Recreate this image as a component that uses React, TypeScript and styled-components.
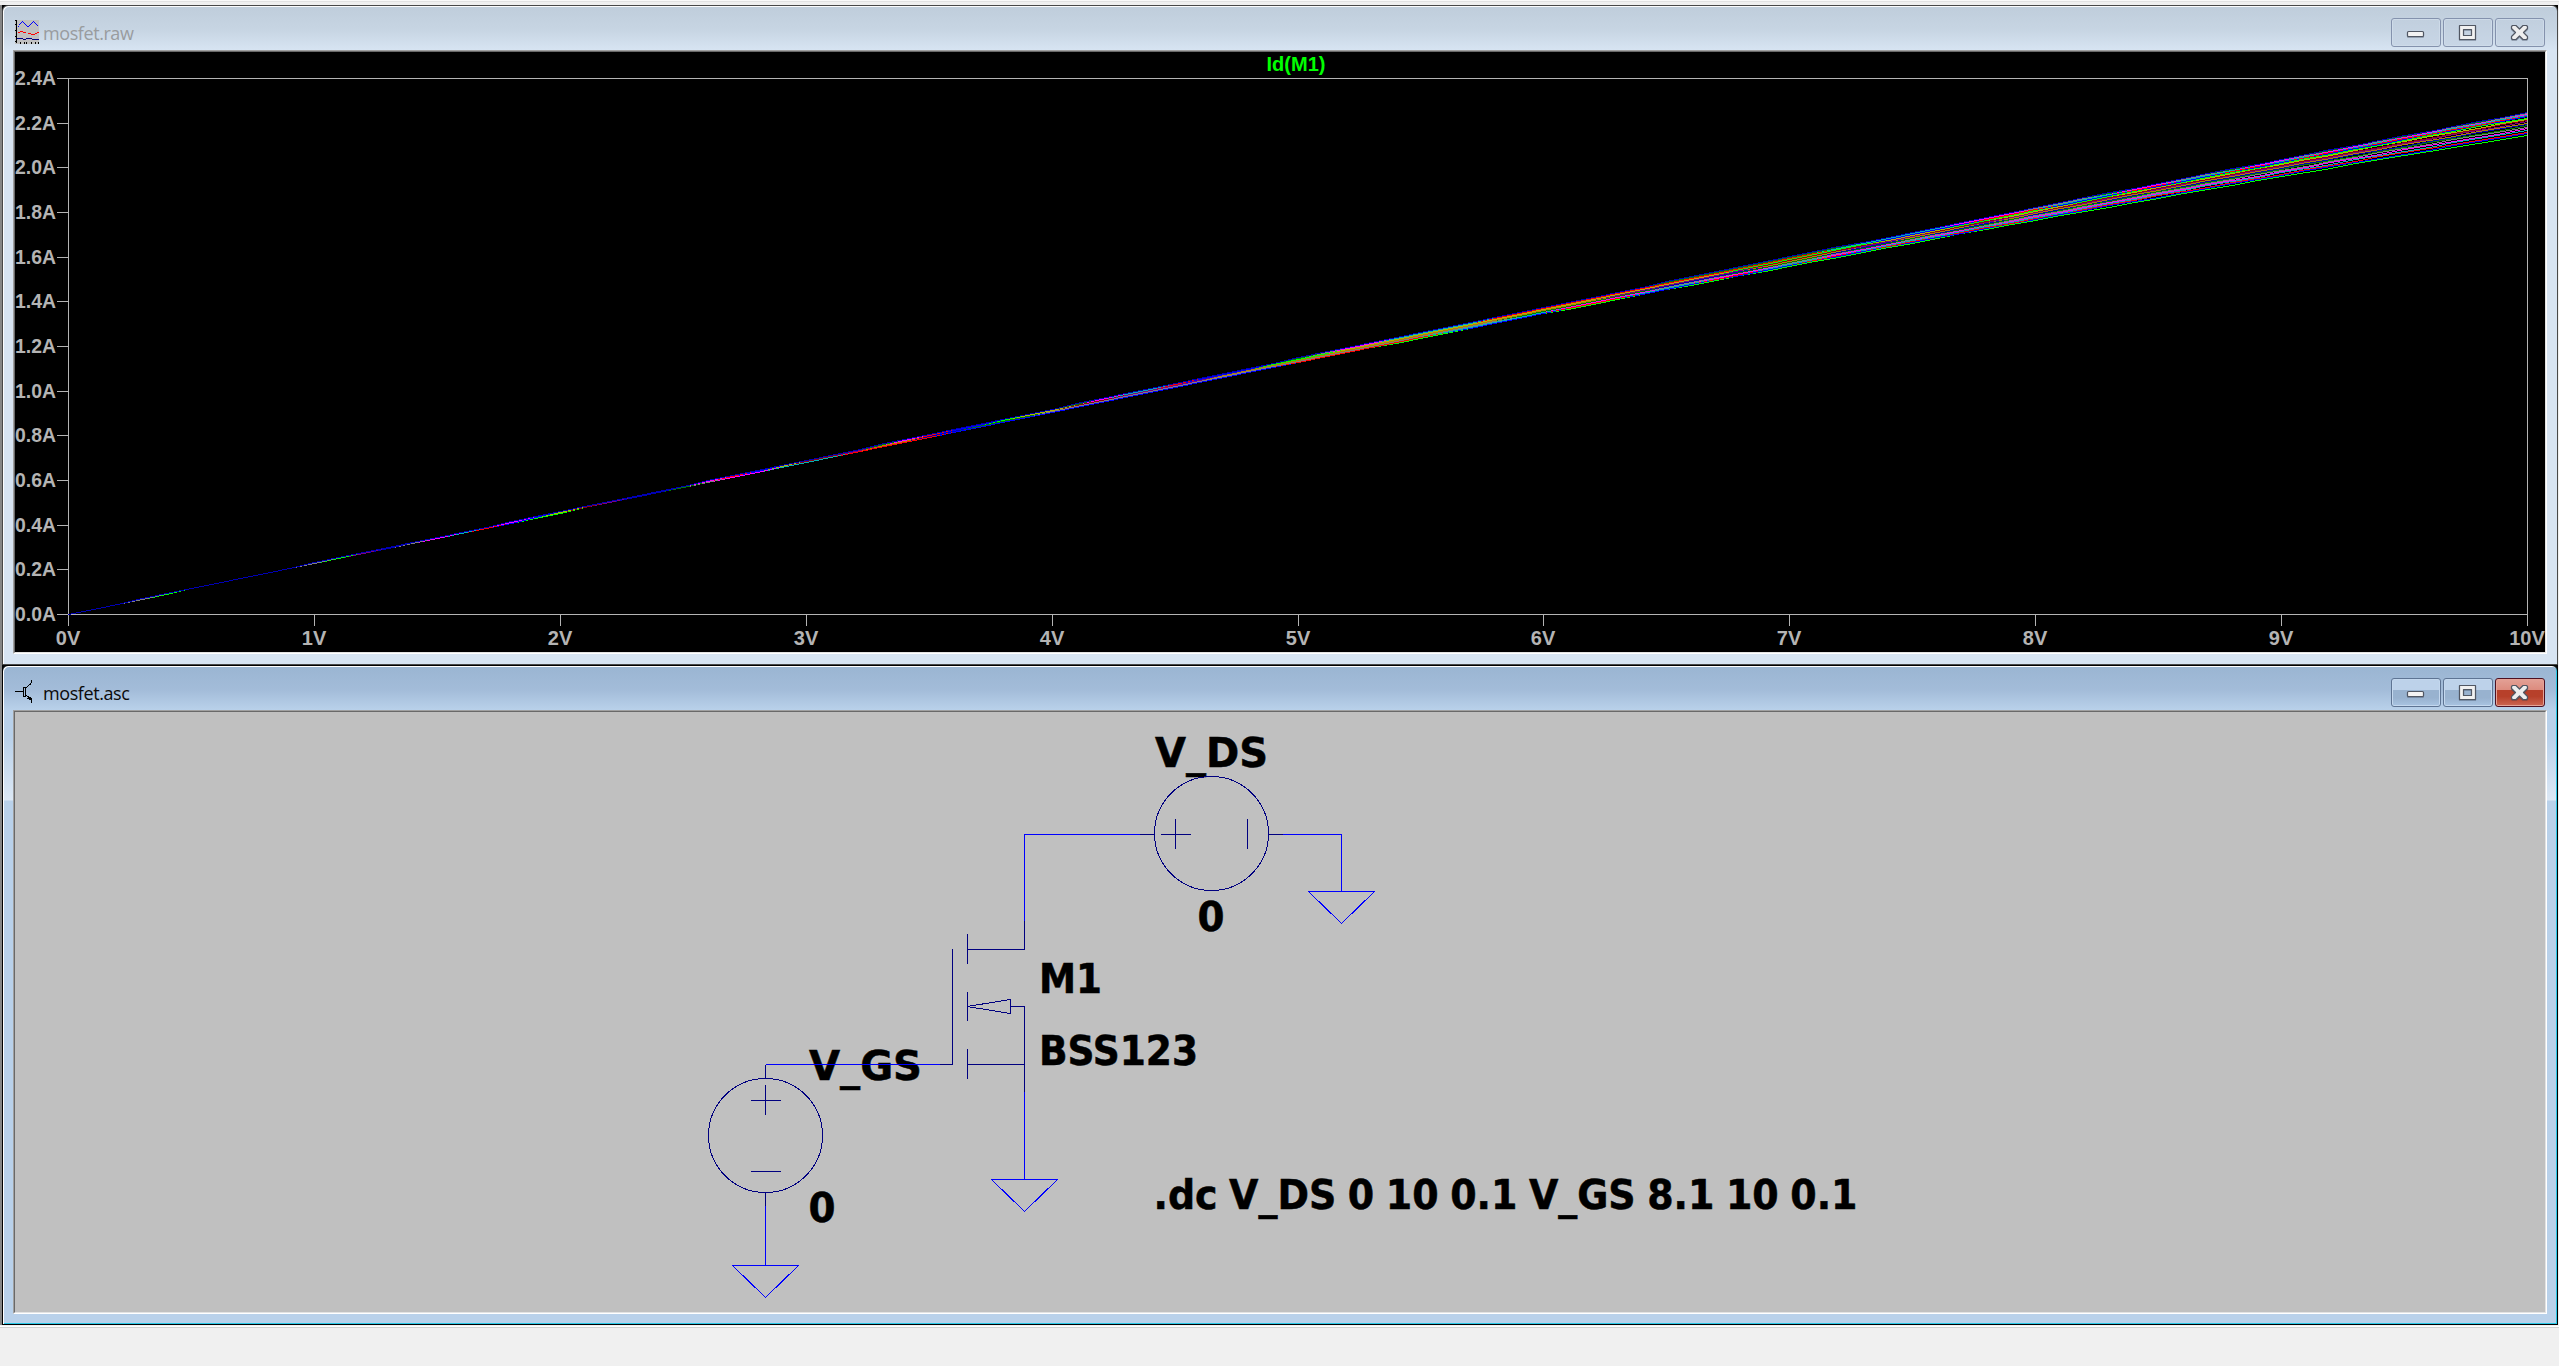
import React from "react";
import styled, { createGlobalStyle, css } from "styled-components";

const GlobalStyle = createGlobalStyle`
  html, body { margin: 0; padding: 0; background: #f0f0f0; }
  body { overflow: hidden; }
`;

const Workspace = styled.main`
  box-sizing: border-box;
  width: 2559px;
  height: 1366px;
  display: flex;
  flex-direction: column;
  background: #f0f0f0;
`;

const ToolbarEdge = styled.div`
  box-sizing: border-box;
  height: 5px;
  flex: none;
  background: #f0f0f0;
  border-top: 1px solid #fafafa;
  box-shadow: inset 0 1px 0 #e2e2e2;
`;

const MdiArea = styled.section`
  box-sizing: border-box;
  width: 2558px;
  flex: none;
  display: flex;
  flex-direction: column;
  border-left: 2px solid #868686;
  background: #050505;
`;

const StatusBar = styled.footer`
  flex: 1;
  border-top: 1px solid #f0f0f0;
  box-shadow: inset 0 1px 0 #ffffff, inset 0 2px 0 #d2d2d2;
  background: #f0f0f0;
`;

const Frame = styled.article<{ $active: boolean }>`
  box-sizing: border-box;
  width: 2556px;
  height: 660px;
  display: flex;
  flex-direction: column;
  padding: 0 9px 9px;
  border: 1px solid ${(p) => (p.$active ? "#000" : "#484848")};
  border-radius: 6px 6px 0 0;
  ${(p) =>
    p.$active
      ? css`
          box-shadow: inset 1px 1px 0 #fff, inset -1px -1px 0 #28c8e6;
          background:
            linear-gradient(#9ab5d2 0, #a3bcd9 24px, #b9d1ea 44px, #b9d1ea 70px, #dce8f5 134px, #b9d1ea 135px);
        `
      : css`
          box-shadow: inset 1px 1px 0 #fbfcfd;
          background: linear-gradient(#bfcddb 0, #c7d5e3 24px, #d7e4f2 44px);
        `}
`;

const TitleBar = styled.header`
  box-sizing: border-box;
  height: 44px;
  flex: none;
  display: flex;
  align-items: flex-start;
  padding: 12px 3px 0 3px;
`;

const TitleIcon = styled.svg`
  width: 24px;
  height: 24px;
  margin-top: 2px;
  flex: none;
`;

const Title = styled.h1<{ $active: boolean }>`
  flex: 1;
  margin: 2px 0 0 4px;
  font: 400 18px/26px "Open Sans", "Noto Sans", sans-serif;
  letter-spacing: -0.42px;
  color: ${(p) => (p.$active ? "#0a0a0a" : "#999c9f")};
`;

const Controls = styled.div`
  display: flex;
  gap: 2px;
`;

const ControlButton = styled.button<{ $tone: "idle" | "blue" | "red" }>`
  box-sizing: border-box;
  width: 50px;
  height: 29px;
  padding: 0;
  display: flex;
  align-items: center;
  justify-content: center;
  border-radius: 3px;
  ${(p) =>
    p.$tone === "idle" &&
    css`
      border: 1px solid #8492ad;
      background: linear-gradient(#c1cfde, #c8d6e6);
      box-shadow: inset 0 0 0 1px #cedbe9;
    `}
  ${(p) =>
    p.$tone === "blue" &&
    css`
      border: 1px solid #5e7493;
      background: linear-gradient(#bdd2ea 0 41%, #98b2cf 42% 70%, #a9c4e2);
      box-shadow: inset 0 0 0 1px #c4d8ee;
    `}
  ${(p) =>
    p.$tone === "red" &&
    css`
      border: 1px solid #4e1122;
      background: linear-gradient(#e3a196 0, #dc8b7e 41%, #b7402a 42% 65%, #cb6652);
      box-shadow: inset 0 0 0 1px #e5a397;
    `}
`;

const Glyph = styled.svg`
  width: 20px;
  height: 19px;
  margin-right: 2px;
  stroke-width: 1.2;
  filter: drop-shadow(0 1px 0.5px rgba(50, 60, 80, 0.35));
`;

const Client = styled.div<{ $fill: string }>`
  box-sizing: border-box;
  flex: none;
  width: 2534px;
  height: 604px;
  margin-left: 1px;
  border: 1px solid;
  border-color: #a0a0a0 #fff #fff #a0a0a0;
  background: ${(p) => p.$fill};
  display: flex;
`;

const ClientInner = styled.div`
  box-sizing: border-box;
  width: 2532px;
  height: 602px;
  border: 1px solid;
  border-color: #696969 #e3e3e3 #e3e3e3 #696969;
`;

const Canvas = styled.svg`
  display: block;
  width: 2530px;
  height: 600px;
`;

const AxisText = styled.text`
  font: 700 20px "Liberation Sans", Arial, sans-serif;
  fill: #b4b4b4;
`;

const TraceText = styled(AxisText)`
  fill: #00ff00;
`;

const SchematicText = styled.text`
  font: 700 40px "DejaVu Sans Condensed", "DejaVu Sans", sans-serif;
  font-stretch: condensed;
  word-spacing: -1.5px;
  fill: #000;
  stroke: #000;
  stroke-width: 0.5px;
`;

/* ---------- window buttons ---------- */

const MinimizeGlyph = () => (
  <Glyph viewBox="0 0 20 19">
    <rect x="2.500" y="8.500" width="16" height="5" rx="1" fill="#f3f3f3" stroke="#515763" />
  </Glyph>
);

const MaximizeGlyph = () => (
  <Glyph viewBox="0 0 20 19">
    <path
      d="M2.500 2.500h16v14h-16zM6.500 6.500v6h8v-6z"
      fill="#f1f1f1"
      fillRule="evenodd"
      stroke="#515763"
      strokeLinejoin="round"
    />
  </Glyph>
);

const CloseGlyph = () => (
  <Glyph viewBox="0 0 20 19">
    <path
      d="M3.500 2.500H7L10.500 6 14 2.500H17.500L18.500 3.500V5.500L14.500 9.500 18.500 13.500V15.500L17.500 16.500H14L10.500 13 7 16.500H3.500L2.500 15.500V13.500L6.500 9.500 2.500 5.500V3.500Z"
      fill="#eeeeee"
      stroke="#515763"
      strokeLinejoin="round"
    />
  </Glyph>
);

const WaveformIcon = () => (
  <TitleIcon viewBox="0 0 24 24" shapeRendering="crispEdges">
    <rect width="24" height="24" fill="#c0c0c0" />
    <path d="M1.500 0v23M0 .5h2M0 4.500h2M0 10.500h2M0 16.500h2M0 21.500h2" stroke="#000" />
    <path d="M5.500 22v2M9.500 22v2M11.500 22v2M16.500 22v2M20.500 22v2M23.500 22v2" stroke="#000" />
    <path
      d="M3 6.500h1M4 4.500h1M5 3.500h1M6 2.500h1M7 1.500h1M8 2.500h1M9 3.500h1M10 4.500h1M11 5.500h1M12 6.500h2M14 5.500h1M15 4.500h1M16 3.500h1M17 2.500h1M18 1.500h1M19 2.500h1M20 3.500h1M21 4.500h1M22 5.500h1"
      stroke="#0000ff"
    />
    <path d="M3 12.500h2M5 11.500h3M8 12.500h3M13 13.500h3M16 14.500h4M20 13.500h2M22 12.500h2" stroke="#ff0000" />
    <path d="M2 18.500h6M8 19.500h3M11 18.500h6M17 19.500h7" stroke="#000080" />
  </TitleIcon>
);

const TransistorIcon = () => (
  <TitleIcon viewBox="0 0 24 24" shapeRendering="crispEdges" fill="none" stroke="#000">
    <path d="M0 11.500h9M8.500 7v10M10.500 7v10M9 7.500h2M9 16.500h2" />
    <path d="M11 7.500h1M12 6.500h1M13 5.500h1M14 4.500h2M15 3.500h1M16.500 0v3" />
    <path d="M11 15.500h1M12 16.500h2M13 17.500h3M12 18.500h4M14 19.500h3M16.500 18v5" />
  </TitleIcon>
);

/* ---------- plot ---------- */

const PLOT = { left: 68, right: 2527, top: 78, bottom: 614 };
const PALETTE = [
  "#00ff00", "#0000ff", "#ff0000", "#00b4b4", "#ff00ff", "#808080",
  "#008000", "#0000b4", "#b48000", "#800080", "#900010", "#b4b400",
];
const STEPS = 20;
const SAMPLES = 100;

/* Drain current through M1, interpolated between the lowest and highest gate voltage. */
const drainCurrent = (volts: number, step: number) => {
  const t = 1 - Math.pow(1 - step / (STEPS - 1), 1.44);
  const lowest = volts * (0.2268 - 1.24e-5 * volts ** 3);
  return lowest + t * (0.0028 * volts + 0.074 * Math.pow(volts / 10, 3.33));
};

/* The sweep is sampled every 0.1 V; each sample snaps to a whole pixel and
   the samples are joined by one-pixel-high runs. */
const tracePath = (step: number) => {
  const scale = (PLOT.bottom - PLOT.top) / 2.4;
  const points = Array.from({ length: SAMPLES + 1 }, (_, i) => ({
    x: Math.round(PLOT.left + ((PLOT.right - PLOT.left) * i) / SAMPLES),
    y: PLOT.bottom - Math.floor(drainCurrent(i / 10, step) * scale + 0.73),
  }));
  let d = "";
  let start = PLOT.left;
  let y = points[0].y;
  for (let i = 1; i < points.length; i++) {
    const a = points[i - 1];
    const b = points[i];
    for (let x = a.x + 1; x <= b.x; x++) {
      const next = Math.round(a.y + ((b.y - a.y) * (x - a.x)) / (b.x - a.x));
      if (next !== y) {
        d += `M${start} ${y + 0.5}H${x}`;
        start = x;
        y = next;
      }
    }
  }
  return `${d}M${start} ${y + 0.5}H${PLOT.right}`;
};

const TRACES = Array.from({ length: STEPS }, (_, i) => ({ d: tracePath(i), color: PALETTE[i % PALETTE.length] }));

const Y_TICKS = Array.from({ length: 13 }, (_, i) => ({
  y: Math.round(PLOT.bottom - (i / 12) * (PLOT.bottom - PLOT.top)),
  label: `${(i * 0.2).toFixed(1)}A`,
}));
const X_TICKS = Array.from({ length: 11 }, (_, i) => ({
  x: Math.round(PLOT.left + (i / 10) * (PLOT.right - PLOT.left)),
  label: `${i}V`,
}));

const Plot = () => (
  <Canvas viewBox="15 52 2530 600">
    <g stroke="#b4b4b4" fill="none" shapeRendering="crispEdges">
      <rect x="68.5" y="78.5" width="2459" height="536" />
      {Y_TICKS.map((t) => (
        <path key={t.label} d={`M57 ${t.y + 0.5}H68`} />
      ))}
      {X_TICKS.map((t) => (
        <path key={t.label} d={`M${t.x + 0.5} 614V626`} />
      ))}
    </g>
    <g fill="none" shapeRendering="crispEdges">
      {TRACES.map((t, i) => (
        <path key={i} d={t.d} stroke={t.color} />
      ))}
    </g>
    {Y_TICKS.map((t) => (
      <AxisText key={t.label} x="15" y={t.y + 7} textLength="41" lengthAdjust="spacingAndGlyphs">
        {t.label}
      </AxisText>
    ))}
    {X_TICKS.map((t) => (
      <AxisText key={t.label} x={t.x} y="644.5" textAnchor="middle">
        {t.label}
      </AxisText>
    ))}
    <TraceText x="1266.500" y="71" textLength="59" lengthAdjust="spacingAndGlyphs">
      Id(M1)
    </TraceText>
  </Canvas>
);

/* ---------- schematic ---------- */

const LABELS = [
  { x: 1155, y: 767, w: 113, text: "V_DS" },
  { x: 1197.5, y: 931, w: 27, text: "0" },
  { x: 1039, y: 993, w: 63, text: "M1" },
  { x: 1039, y: 1065, w: 159, text: "BSS123" },
  { x: 809, y: 1080, w: 113, text: "V_GS" },
  { x: 808.5, y: 1222, w: 27, text: "0" },
  { x: 1153.5, y: 1209, w: 704, text: ".dc V_DS 0 10 0.1 V_GS 8.1 10 0.1" },
];

const Ground = ({ x, y }: { x: number; y: number }) => (
  <path d={`M${x - 33} ${y}H${x + 33}L${x} ${y + 32}Z`} />
);

const Schematic = () => (
  <Canvas viewBox="15 712 2530 600">
    {LABELS.map((l) => (
      <SchematicText key={`${l.x}-${l.y}`} x={l.x} y={l.y} textLength={l.w} lengthAdjust="spacingAndGlyphs">
        {l.text}
      </SchematicText>
    ))}
    <g stroke="#0000ff" fill="none" shapeRendering="crispEdges">
      <path d="M1140 834.500H1024.500V921" />
      <path d="M1283 834.500H1341.500V891" />
      <path d="M765.500 1064.500H940" />
      <path d="M1024.500 1092V1179" />
      <path d="M765.500 1206V1265" />
      <Ground x={1341.5} y={891.5} />
      <Ground x={1024.5} y={1179.5} />
      <Ground x={765.5} y={1265.5} />
    </g>
    <g stroke="#000080" fill="none" shapeRendering="crispEdges">
      <circle cx="1211.500" cy="833.500" r="57" />
      <path d="M1140 834.500H1154M1269 834.500H1283" />
      <path d="M1161 834.500H1191M1175.500 819V849M1247.500 819V849" />
      <path d="M1024.500 921V949.500H967M967.500 934V964M952.500 949V1064.500H940" />
      <path d="M967.500 992V1021M967 1006.500L1010.500 999.500V1013.500L967 1006.500M1010 1006.500H1024.500V1092" />
      <path d="M967.500 1049V1079M967 1064.500H1024" />
      <circle cx="765.500" cy="1135.500" r="57" />
      <path d="M765.500 1065V1078M765.500 1192V1206" />
      <path d="M751 1100.500H781M765.500 1085V1115M751 1171.500H781" />
    </g>
  </Canvas>
);

interface WindowProps {
  title: string;
  active: boolean;
  icon: React.ReactNode;
  fill: string;
  children: React.ReactNode;
}

const MdiWindow = ({ title, active, icon, fill, children }: WindowProps) => (
  <Frame $active={active}>
    <TitleBar>
      {icon}
      <Title $active={active}>{title}</Title>
      <Controls>
        <ControlButton $tone={active ? "blue" : "idle"} aria-label="Minimize">
          <MinimizeGlyph />
        </ControlButton>
        <ControlButton $tone={active ? "blue" : "idle"} aria-label="Maximize">
          <MaximizeGlyph />
        </ControlButton>
        <ControlButton $tone={active ? "red" : "idle"} aria-label="Close">
          <CloseGlyph />
        </ControlButton>
      </Controls>
    </TitleBar>
    <Client $fill={fill}>
      <ClientInner>{children}</ClientInner>
    </Client>
  </Frame>
);

export default function App() {
  return (
    <>
      <GlobalStyle />
      <Workspace>
        <ToolbarEdge />
        <MdiArea>
          <MdiWindow title="mosfet.raw" active={false} icon={<WaveformIcon />} fill="#000">
            <Plot />
          </MdiWindow>
          <MdiWindow title="mosfet.asc" active icon={<TransistorIcon />} fill="#c0c0c0">
            <Schematic />
          </MdiWindow>
        </MdiArea>
        <StatusBar />
      </Workspace>
    </>
  );
}
